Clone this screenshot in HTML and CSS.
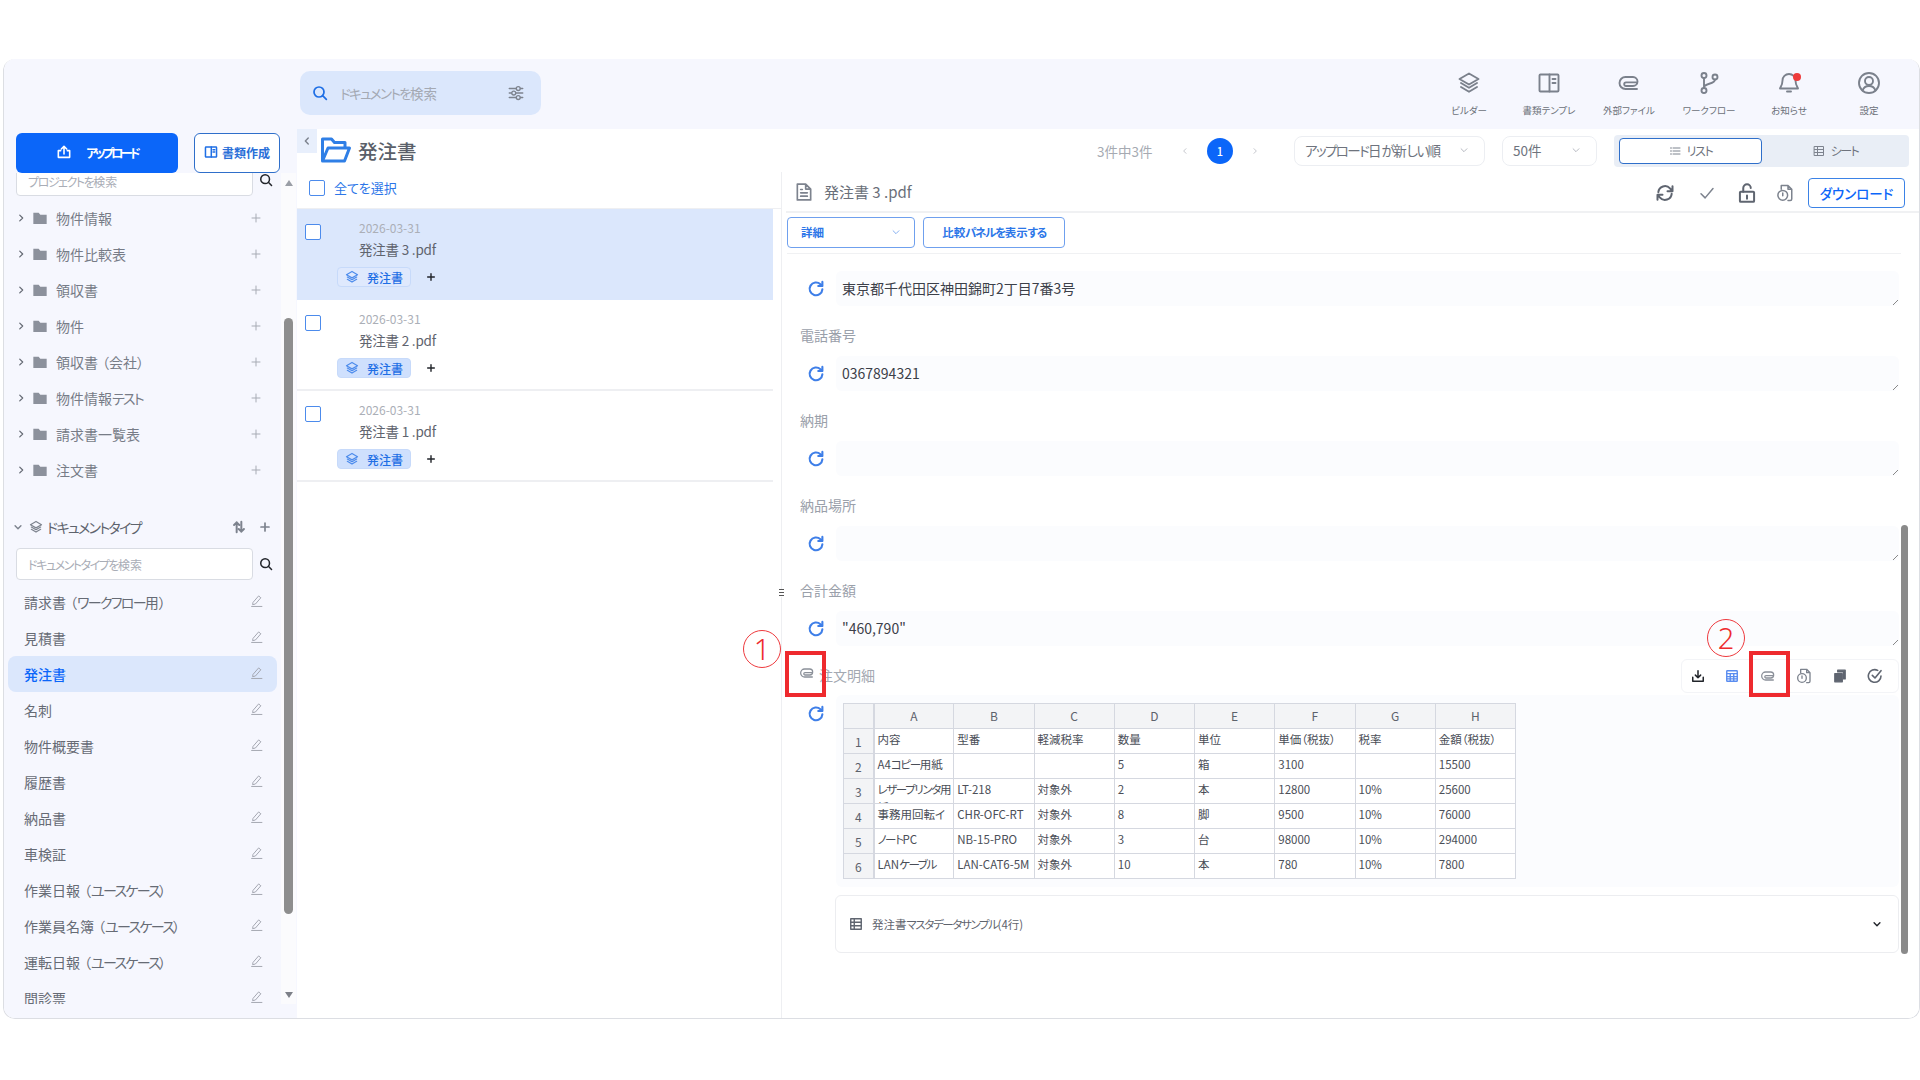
FILE: index.html
```html
<!DOCTYPE html>
<html lang="ja">
<head>
<meta charset="utf-8">
<title>発注書</title>
<link rel="stylesheet" href="styles.css">
</head>
<body>
<svg class="sprite" xmlns="http://www.w3.org/2000/svg">
  <symbol id="i-search" viewBox="0 0 24 24"><circle cx="10.5" cy="10.5" r="7.5"/><path d="M16 16l5.5 5.5"/></symbol>
  <symbol id="i-sliders" viewBox="0 0 24 24"><path d="M3 6h9M18 6h3M3 12h3M12 12h9M3 18h9M18 18h3"/><circle cx="15" cy="6" r="2.6"/><circle cx="9" cy="12" r="2.6"/><circle cx="15" cy="18" r="2.6"/></symbol>
  <symbol id="i-upload" viewBox="0 0 24 24"><path d="M12 15V4M8 7.5L12 3.5l4 4M7 10H3.5v10h17V10H17"/></symbol>
  <symbol id="i-book" viewBox="0 0 24 24"><rect x="2.5" y="3.5" width="19" height="17" rx="1"/><path d="M12.5 3.5v17M15.5 8h3M15.5 12h3"/></symbol>
  <symbol id="i-layers" viewBox="0 0 24 24"><path d="M12 2.5L21.5 8 12 13.5 2.5 8z"/><path d="M4 12l8 4.7 8-4.7M4 16l8 4.7 8-4.7"/></symbol>
  <symbol id="i-clip" viewBox="0 0 24 24"><path d="M20 18H8.500a6 6 0 0 1 0-12H16a4.500 4.500 0 0 1 0 9H9a1.800 1.800 0 0 1 0-3.600h10"/></symbol>
  <symbol id="i-branch" viewBox="0 0 24 24"><circle cx="7" cy="4.500" r="2.500"/><circle cx="7" cy="19.500" r="2.500"/><circle cx="18" cy="6" r="2.500"/><path d="M7 7v10M18 8.500c0 5-11 3.500-11 8"/></symbol>
  <symbol id="i-bell" viewBox="0 0 24 24"><path d="M12 3a6.500 6.500 0 0 0-6.500 6.500c0 5-2.500 7-2.500 8h18c0-1-2.500-3-2.500-8A6.500 6.500 0 0 0 12 3zM10 20.500h4"/></symbol>
  <symbol id="i-user" viewBox="0 0 24 24"><circle cx="12" cy="12" r="10"/><circle cx="12" cy="10" r="4"/><path d="M5.500 19.500c1-3 3.500-4.500 6.500-4.500s5.500 1.500 6.500 4.500"/></symbol>
  <symbol id="i-down" viewBox="0 0 24 24"><path d="M5 9l7 7 7-7"/></symbol>
  <symbol id="i-left" viewBox="0 0 24 24"><path d="M15 5l-7 7 7 7"/></symbol>
  <symbol id="i-right" viewBox="0 0 24 24"><path d="M9 5l7 7-7 7"/></symbol>
  <symbol id="i-plus" viewBox="0 0 24 24"><path d="M12 4v16M4 12h16"/></symbol>
  <symbol id="i-folder" viewBox="0 0 24 24"><path class="solid" d="M2 4h8l2.500 3H22v14H2z"/></symbol>
  <symbol id="i-pen" viewBox="0 0 24 24"><path d="M6 15L16 3.500l4 3.500-10 11.500-4.500 1z"/><path d="M3 23h19"/></symbol>
  <symbol id="i-sort" viewBox="0 0 24 24"><path d="M8 21V4M3.500 8.500L8 4l4.500 4.500M16 3v17M11.500 15.500L16 20l4.500-4.500"/></symbol>
  <symbol id="i-refresh" viewBox="0 0 24 24"><path d="M20.500 12.500a8.500 8.500 0 1 1-2.600-6.800l2.600 2.300M20.500 2.500V8H15"/></symbol>
  <symbol id="i-sync" viewBox="0 0 24 24"><path d="M4 11a8 8 0 0 1 14-4.500l2.500 3M21 4v6h-6M20 13a8 8 0 0 1-14 4.500L3.500 15M3 20v-6h6"/></symbol>
  <symbol id="i-check" viewBox="0 0 24 24"><path d="M4 13l5.500 5.500L20 6"/></symbol>
  <symbol id="i-lock" viewBox="0 0 24 24"><rect x="3.500" y="10.500" width="17" height="12" rx="1"/><path d="M7.500 10.500V6a4.500 4.500 0 0 1 9 0M12 15v4"/></symbol>
  <symbol id="i-history" viewBox="0 0 24 24"><path d="M7 7V2h9l5 5v13a2 2 0 0 1-2 2h-3M16 2v5h5"/><circle cx="9" cy="15" r="6.500"/><path d="M9 12v3.500"/></symbol>
  <symbol id="i-doc" viewBox="0 0 24 24"><path d="M4 2.500h10l6 6v13H4zM14 2.500v6h6M8 13h8M8 17h8M8 9h2"/></symbol>
  <symbol id="i-tray" viewBox="0 0 24 24"><path d="M12 3v12M7.500 10.500L12 15l4.500-4.500M3 14v7h18v-7"/></symbol>
  <symbol id="i-grid" viewBox="0 0 24 24"><rect x="3" y="3" width="18" height="18" rx="1"/><path d="M3 8h18M3 13h18M3 17h18M9 8v13M15 8v13"/></symbol>
  <symbol id="i-copy" viewBox="0 0 24 24"><path class="solid" d="M3 8h13v14H3z"/><path class="solid" d="M8 2h13v15h-3V5H8z"/></symbol>
  <symbol id="i-ok" viewBox="0 0 24 24"><path d="M21 12a9.500 9.500 0 1 1-5-8.400M8 11l4 4 9-11"/></symbol>
  <symbol id="i-list" viewBox="0 0 24 24"><path d="M3 6h2M8 6h14M3 12h2M8 12h14M3 18h2M8 18h14"/></symbol>
  <symbol id="i-sheet" viewBox="0 0 24 24"><rect x="3" y="3" width="18" height="18"/><path d="M3 9h18M3 15h18M9 3v18"/></symbol>
  <symbol id="i-open" viewBox="0 0 32 28"><path d="M2.500 25V3h9l3 3.500H25V12M2.500 25L8 12h21.500l-5 13z"/></symbol>
</svg>

<div class="app">
  <header class="topnav">
    <div class="search">
      <svg class="ic ic-16 blue"><use href="#i-search"/></svg>
      <span class="search-text"><span class="k">ドキュメントを</span>検索</span>
      <svg class="ic ic-18 grey search-filter"><use href="#i-sliders"/></svg>
    </div>
    <nav class="nav">
      <div class="nav-item"><svg class="ic ic-24"><use href="#i-layers"/></svg><span>ビルダー</span></div>
      <div class="nav-item"><svg class="ic ic-24"><use href="#i-book"/></svg><span>書類テンプレ</span></div>
      <div class="nav-item"><svg class="ic ic-24"><use href="#i-clip"/></svg><span>外部ファイル</span></div>
      <div class="nav-item"><svg class="ic ic-24"><use href="#i-branch"/></svg><span>ワークフロー</span></div>
      <div class="nav-item"><div class="bell"><svg class="ic ic-24"><use href="#i-bell"/></svg><i class="dot"></i></div><span>お知らせ</span></div>
      <div class="nav-item"><svg class="ic ic-24"><use href="#i-user"/></svg><span>設定</span></div>
    </nav>
  </header>

  <div class="workspace">
    <aside class="sidebar">
      <div class="side-actions">
        <button class="btn-upload"><svg class="ic ic-16 white"><use href="#i-upload"/></svg><span class="k-tight">アップロード</span></button>
        <button class="btn-create"><svg class="ic ic-14 blue"><use href="#i-book"/></svg>書類作成</button>
      </div>
      <div class="side-scroll">
        <div class="side-content">
          <div class="side-search first"><div class="input"><span class="k">プロジェクトを</span>検索</div><svg class="ic ic-14 dark"><use href="#i-search"/></svg></div>
          <div class="tree">
            <div class="tree-row"><svg class="ic ic-10 chev"><use href="#i-right"/></svg><svg class="ic ic-16 fill"><use href="#i-folder"/></svg><span class="tree-label">物件情報</span><svg class="ic ic-12 light"><use href="#i-plus"/></svg></div>
            <div class="tree-row"><svg class="ic ic-10 chev"><use href="#i-right"/></svg><svg class="ic ic-16 fill"><use href="#i-folder"/></svg><span class="tree-label">物件比較表</span><svg class="ic ic-12 light"><use href="#i-plus"/></svg></div>
            <div class="tree-row"><svg class="ic ic-10 chev"><use href="#i-right"/></svg><svg class="ic ic-16 fill"><use href="#i-folder"/></svg><span class="tree-label">領収書</span><svg class="ic ic-12 light"><use href="#i-plus"/></svg></div>
            <div class="tree-row"><svg class="ic ic-10 chev"><use href="#i-right"/></svg><svg class="ic ic-16 fill"><use href="#i-folder"/></svg><span class="tree-label">物件</span><svg class="ic ic-12 light"><use href="#i-plus"/></svg></div>
            <div class="tree-row"><svg class="ic ic-10 chev"><use href="#i-right"/></svg><svg class="ic ic-16 fill"><use href="#i-folder"/></svg><span class="tree-label">領収書<span class="po">（</span>会社<span class="pc">）</span></span><svg class="ic ic-12 light"><use href="#i-plus"/></svg></div>
            <div class="tree-row"><svg class="ic ic-10 chev"><use href="#i-right"/></svg><svg class="ic ic-16 fill"><use href="#i-folder"/></svg><span class="tree-label">物件情報<span class="k">テスト</span></span><svg class="ic ic-12 light"><use href="#i-plus"/></svg></div>
            <div class="tree-row"><svg class="ic ic-10 chev"><use href="#i-right"/></svg><svg class="ic ic-16 fill"><use href="#i-folder"/></svg><span class="tree-label">請求書一覧表</span><svg class="ic ic-12 light"><use href="#i-plus"/></svg></div>
            <div class="tree-row"><svg class="ic ic-10 chev"><use href="#i-right"/></svg><svg class="ic ic-16 fill"><use href="#i-folder"/></svg><span class="tree-label">注文書</span><svg class="ic ic-12 light"><use href="#i-plus"/></svg></div>
          </div>
          <div class="type-head">
            <svg class="ic ic-10 grey thick"><use href="#i-down"/></svg>
            <svg class="ic ic-14 grey"><use href="#i-layers"/></svg>
            <span class="type-title k">ドキュメントタイプ</span>
            <svg class="ic ic-14 grey thick"><use href="#i-sort"/></svg>
            <svg class="ic ic-12 grey thick"><use href="#i-plus"/></svg>
          </div>
          <div class="side-search second"><div class="input"><span class="k">ドキュメントタイプを</span>検索</div><svg class="ic ic-14 dark"><use href="#i-search"/></svg></div>
          <ul class="types">
            <li><span>請求書<span class="po">（</span><span class="k">ワークフロー</span>用<span class="pc">）</span></span><svg class="ic ic-13 pen"><use href="#i-pen"/></svg></li>
            <li><span>見積書</span><svg class="ic ic-13 pen"><use href="#i-pen"/></svg></li>
            <li class="active"><span>発注書</span><svg class="ic ic-13 pen"><use href="#i-pen"/></svg></li>
            <li><span>名刺</span><svg class="ic ic-13 pen"><use href="#i-pen"/></svg></li>
            <li><span>物件概要書</span><svg class="ic ic-13 pen"><use href="#i-pen"/></svg></li>
            <li><span>履歴書</span><svg class="ic ic-13 pen"><use href="#i-pen"/></svg></li>
            <li><span>納品書</span><svg class="ic ic-13 pen"><use href="#i-pen"/></svg></li>
            <li><span>車検証</span><svg class="ic ic-13 pen"><use href="#i-pen"/></svg></li>
            <li><span>作業日報<span class="po">（</span><span class="k">ユースケース</span><span class="pc">）</span></span><svg class="ic ic-13 pen"><use href="#i-pen"/></svg></li>
            <li><span>作業員名簿<span class="po">（</span><span class="k">ユースケース</span><span class="pc">）</span></span><svg class="ic ic-13 pen"><use href="#i-pen"/></svg></li>
            <li><span>運転日報<span class="po">（</span><span class="k">ユースケース</span><span class="pc">）</span></span><svg class="ic ic-13 pen"><use href="#i-pen"/></svg></li>
            <li><span>問診票</span><svg class="ic ic-13 pen"><use href="#i-pen"/></svg></li>
          </ul>
        </div>
        <div class="side-track">
          <i class="arrow up"></i>
          <div class="thumb"></div>
          <i class="arrow dn"></i>
        </div>
      </div>
    </aside>

    <main class="main">
      <div class="mainbar">
        <button class="collapse"><svg class="ic ic-10 grey thick"><use href="#i-left"/></svg></button>
        <svg class="open-folder"><use href="#i-open"/></svg>
        <h1 class="title">発注書</h1>
        <div class="bar-right">
          <span class="count">3件中3件</span>
          <svg class="ic ic-8 light"><use href="#i-left"/></svg>
          <span class="page">1</span>
          <svg class="ic ic-8 light"><use href="#i-right"/></svg>
          <div class="select sort"><span><span class="k">アップロード</span>日<span class="k">が</span>新<span class="k">しい</span>順</span><svg class="ic ic-10 light"><use href="#i-down"/></svg></div>
          <div class="select size"><span>50件</span><svg class="ic ic-10 light"><use href="#i-down"/></svg></div>
          <div class="toggle">
            <div class="tg on"><svg class="ic ic-12 grey"><use href="#i-list"/></svg><span class="k">リスト</span></div>
            <div class="tg"><svg class="ic ic-12 grey"><use href="#i-sheet"/></svg><span class="k">シート</span></div>
          </div>
        </div>
      </div>

      <div class="panes">
        <section class="files">
          <div class="select-all"><i class="cb"></i><span>全てを選択</span></div>
          <div class="file selected">
            <i class="cb"></i>
            <div class="file-date">2026-03-31</div>
            <div class="file-name">発注書 3 .pdf</div>
            <div class="file-tags"><span class="tag pale"><svg class="ic ic-14 blue2"><use href="#i-layers"/></svg>発注書</span><svg class="ic ic-10 dark thick"><use href="#i-plus"/></svg></div>
          </div>
          <div class="file">
            <i class="cb"></i>
            <div class="file-date">2026-03-31</div>
            <div class="file-name">発注書 2 .pdf</div>
            <div class="file-tags"><span class="tag"><svg class="ic ic-14 blue2"><use href="#i-layers"/></svg>発注書</span><svg class="ic ic-10 dark thick"><use href="#i-plus"/></svg></div>
          </div>
          <div class="file">
            <i class="cb"></i>
            <div class="file-date">2026-03-31</div>
            <div class="file-name">発注書 1 .pdf</div>
            <div class="file-tags"><span class="tag"><svg class="ic ic-14 blue2"><use href="#i-layers"/></svg>発注書</span><svg class="ic ic-10 dark thick"><use href="#i-plus"/></svg></div>
          </div>
        </section>

        <section class="detail">
          <i class="handle"></i>
          <div class="detail-head">
            <svg class="ic ic-20 grey"><use href="#i-doc"/></svg>
            <span class="detail-name">発注書 3 .pdf</span>
            <div class="detail-tools">
              <svg class="ic ic-20 darkgrey"><use href="#i-sync"/></svg>
              <svg class="ic ic-18 grey tool-check"><use href="#i-check"/></svg>
              <svg class="ic ic-20 darkgrey"><use href="#i-lock"/></svg>
              <svg class="ic ic-18 grey tool-history"><use href="#i-history"/></svg>
              <button class="btn-dl">ダウンロード</button>
            </div>
          </div>
          <div class="detail-actions">
            <div class="btn-line wide"><span>詳細</span><svg class="ic ic-10 blue3"><use href="#i-down"/></svg></div>
            <div class="btn-line"><span>比較<span class="k">パネルを</span>表示<span class="k">する</span></span></div>
          </div>
          <div class="form">
            <div class="field"><svg class="ic ic-18 refresh"><use href="#i-refresh"/></svg><div class="value">東京都千代田区神田錦町2丁目7番3号</div></div>
            <div class="label">電話番号</div>
            <div class="field"><svg class="ic ic-18 refresh"><use href="#i-refresh"/></svg><div class="value">0367894321</div></div>
            <div class="label">納期</div>
            <div class="field"><svg class="ic ic-18 refresh"><use href="#i-refresh"/></svg><div class="value"></div></div>
            <div class="label">納品場所</div>
            <div class="field"><svg class="ic ic-18 refresh"><use href="#i-refresh"/></svg><div class="value"></div></div>
            <div class="label">合計金額</div>
            <div class="field"><svg class="ic ic-18 refresh"><use href="#i-refresh"/></svg><div class="value">"460,790"</div></div>
            <div class="table-head">
              <svg class="ic ic-16 clip-grey"><use href="#i-clip"/></svg>
              <span class="label-inline">注文明細</span>
              <div class="table-tools">
                <svg class="ic ic-14 dark"><use href="#i-tray"/></svg>
                <svg class="ic ic-14 blue4"><use href="#i-grid"/></svg>
                <svg class="ic ic-16 clip-grey"><use href="#i-clip"/></svg>
                <svg class="ic ic-16 grey"><use href="#i-history"/></svg>
                <svg class="ic ic-14 fill2"><use href="#i-copy"/></svg>
                <svg class="ic ic-16 darkgrey"><use href="#i-ok"/></svg>
              </div>
            </div>
            <div class="table-row">
              <svg class="ic ic-18 refresh"><use href="#i-refresh"/></svg>
              <div class="table-box">
                <table class="sheet">
                  <thead><tr><th class="rh"></th><th>A</th><th>B</th><th>C</th><th>D</th><th>E</th><th>F</th><th>G</th><th>H</th></tr></thead>
                  <tbody>
                    <tr><th class="rh">1</th><td><div>内容</div></td><td><div>型番</div></td><td><div>軽減税率</div></td><td><div>数量</div></td><td><div>単位</div></td><td><div>単価（税抜）</div></td><td><div>税率</div></td><td><div>金額（税抜）</div></td></tr>
                    <tr><th class="rh">2</th><td><div>A4<span class="k">コピー</span>用紙</div></td><td><div></div></td><td><div></div></td><td><div>5</div></td><td><div>箱</div></td><td><div>3100</div></td><td><div></div></td><td><div>15500</div></td></tr>
                    <tr><th class="rh">3</th><td><div><span class="k">レザープリンタ</span>用紙</div></td><td><div>LT-218</div></td><td><div>対象外</div></td><td><div>2</div></td><td><div>本</div></td><td><div>12800</div></td><td><div>10%</div></td><td><div>25600</div></td></tr>
                    <tr><th class="rh">4</th><td><div>事務用回転イス</div></td><td><div>CHR-OFC-RT</div></td><td><div>対象外</div></td><td><div>8</div></td><td><div>脚</div></td><td><div>9500</div></td><td><div>10%</div></td><td><div>76000</div></td></tr>
                    <tr><th class="rh">5</th><td><div><span class="k">ノート</span>PC</div></td><td><div>NB-15-PRO</div></td><td><div>対象外</div></td><td><div>3</div></td><td><div>台</div></td><td><div>98000</div></td><td><div>10%</div></td><td><div>294000</div></td></tr>
                    <tr><th class="rh">6</th><td><div>LAN<span class="k">ケーブル</span></div></td><td><div>LAN-CAT6-5M</div></td><td><div>対象外</div></td><td><div>10</div></td><td><div>本</div></td><td><div>780</div></td><td><div>10%</div></td><td><div>7800</div></td></tr>
                  </tbody>
                </table>
              </div>
            </div>
            <div class="accordion">
              <svg class="ic ic-14 darkgrey"><use href="#i-sheet"/></svg>
              <span>発注書<span class="k">マスタデータサンプル</span>(4行)</span>
              <svg class="ic ic-10 dark thick"><use href="#i-down"/></svg>
            </div>
          </div>
          <div class="detail-thumb"></div>
        </section>
      </div>
    </main>
  </div>

  <div class="mark box-1"></div>
  <div class="mark box-2"></div>
  <div class="mark num num-1">1</div>
  <div class="mark num num-2">2</div>
</div>
</body>
</html>
```

FILE: styles.css
```css
* { box-sizing: border-box; }
html, body { margin: 0; height: 100%; overflow: hidden; background: #fff; }
body {
  font-family: "Noto Sans CJK JP", "Noto Sans", sans-serif;
  font-feature-settings: "palt";
  color: #555b66;
}
.sprite { position: absolute; width: 0; height: 0; }
button { font: inherit; cursor: pointer; }

/* condensed kana runs and wider brackets */
.k { letter-spacing: -0.12em; }
.k-tight { letter-spacing: -0.24em; }
.po { padding-left: 4px; }
.pc { padding-right: 4px; }

/* icons */
.ic { fill: none; stroke: #7b818c; stroke-width: 2; stroke-linecap: round; stroke-linejoin: round; flex: none; display: block; }
.ic-8 { width: 8px; height: 8px; }
.ic-10 { width: 10px; height: 10px; }
.ic-12 { width: 12px; height: 12px; }
.ic-13 { width: 13px; height: 13px; }
.ic-14 { width: 14px; height: 14px; }
.ic-16 { width: 16px; height: 16px; }
.ic-18 { width: 18px; height: 18px; }
.ic-20 { width: 20px; height: 20px; }
.ic-24 { width: 24px; height: 24px; }
.blue { stroke: #1f6fe5; stroke-width: 2.6; }
.blue2 { stroke: #4c8bec; }
.blue3 { stroke: #6fa0ee; }
.blue4 { stroke: #5a8df0; stroke-width: 2.4; }
.white { stroke: #fff; stroke-width: 2.4; }
.grey { stroke: #7d838e; }
.chev { stroke: #666b75; stroke-width: 3; }
.darkgrey { stroke: #5f6570; stroke-width: 2.4; }
.light { stroke: #a7abb4; }
.dark { stroke: #22252b; stroke-width: 2.6; }
.thick { stroke-width: 3.4; }
.fill { fill: #8c919c; stroke: none; }
.fill2 { fill: #5f6570; stroke: #5f6570; }
.pen { stroke: #a2a6b0; stroke-width: 1.8; }
.refresh { stroke: #3f7fe8; stroke-width: 2.8; }
.clip-grey { stroke: #8b9099; stroke-width: 1.9; }

/* frame */
.app {
  position: relative;
  margin: 59px 0 0 3px;
  width: 1917px;
  height: 960px;
  border: 1px solid #dcdee3;
  border-top: 0;
  border-radius: 12px;
  background: #fff;
  overflow: hidden;
  display: flex;
  flex-direction: column;
}

/* header */
.topnav {
  height: 70px;
  flex: none;
  background: #f6f7fe;
  display: flex;
  align-items: flex-start;
  padding-left: 296px;
}
.search {
  margin-top: 12px;
  width: 241px;
  height: 44px;
  border-radius: 10px;
  background: #dbe7fc;
  display: flex;
  align-items: center;
  padding: 0 16px 0 12px;
  gap: 12px;
}
.search-text { font-size: 13.5px; color: #a4a9b3; flex: 1; }
.search-filter { stroke-width: 1.8; }
.nav { margin-left: auto; display: flex; padding-right: 10px; }
.nav-item {
  width: 80px;
  height: 70px;
  display: flex;
  flex-direction: column;
  align-items: center;
  padding-top: 12px;
  font-size: 9.5px;
  color: #6b7078;
}
.nav-item .ic { stroke-width: 1.9; }
.nav-item span { margin-top: 7.5px; line-height: 14px; }
.bell { position: relative; width: 24px; height: 24px; }
.dot { position: absolute; right: 0; top: 2px; width: 8px; height: 8px; border-radius: 50%; background: #ee3b3b; }

.workspace { flex: 1; display: flex; min-height: 0; }

/* sidebar */
.sidebar {
  width: 293px;
  flex: none;
  background: #f6f7fe;
  display: flex;
  flex-direction: column;
  padding-bottom: 14px;
}
.side-actions { height: 44px; flex: none; padding: 4px 0 0 12px; display: flex; gap: 16px; }
.btn-upload {
  width: 162px;
  height: 40px;
  border: 0;
  border-radius: 6px;
  background: #0b66f9;
  color: #fff;
  font-size: 12.5px;
  font-weight: 700;
  padding: 0 0 2px;
  display: flex;
  align-items: center;
  justify-content: center;
  gap: 14px;
}
.btn-create {
  width: 86px;
  height: 40px;
  border: 1px solid #2f6fca;
  border-radius: 6px;
  background: #fff;
  color: #2a6fd8;
  font-size: 12px;
  font-weight: 700;
  padding: 0 0 2px;
  display: flex;
  align-items: center;
  justify-content: center;
  gap: 4px;
}
.side-scroll { flex: 1; min-height: 0; display: flex; overflow: hidden; }
.side-content { width: 277px; flex: none; overflow: hidden; }
.side-search { display: flex; align-items: center; padding-left: 12px; gap: 6px; height: 32px; }
.side-search.first { margin-top: -10px; height: 33px; }
.side-search.first .input { padding-top: 3px; }
.side-search.second { margin-top: 3px; }
.input {
  width: 237px;
  height: 100%;
  border: 1px solid #d9dce3;
  border-radius: 4px;
  background: #fff;
  color: #a9adb6;
  font-size: 12px;
  display: flex;
  align-items: center;
  padding-left: 11px;
}
.tree { margin-top: 4px; }
.tree-row { height: 36px; display: flex; align-items: center; padding-left: 12px; }
.tree-row > .ic-16 { margin-left: 6px; }
.tree-label { margin-left: 8px; font-size: 14px; color: #777c87; flex: 1; }
.tree-row > .ic-12 { margin-right: 19px; }
.type-head { margin-top: 21px; height: 36px; display: flex; align-items: center; padding: 0 0 0 9px; gap: 3px; }
.type-head .ic-14:nth-child(2) { margin-left: 3px; }
.type-title { font-size: 14px; color: #5e636d; flex: 1; margin-left: 1px; }
.type-head .ic-12 { margin: 0 10px 0 10px; }
.types { list-style: none; margin: 4px 0 0; padding: 0; }
.types li {
  height: 36px;
  margin: 0 4px;
  padding: 0 14px 0 16px;
  border-radius: 8px;
  display: flex;
  align-items: center;
  justify-content: space-between;
  font-size: 14px;
  color: #666b75;
}
.types li .pen { margin-top: -4px; }
.types li.active { background: #dbe7fc; color: #0b66f9; font-weight: 500; }
.side-track { width: 15px; flex: none; background: #fbfbfd; display: flex; flex-direction: column; align-items: center; padding-top: 7px; }
.arrow { width: 0; height: 0; border-left: 4px solid transparent; border-right: 4px solid transparent; flex: none; }
.arrow.up { border-bottom: 6px solid #9a9ea6; }
.arrow.dn { border-top: 6px solid #7d8088; margin-top: 78px; }
.thumb { width: 9px; height: 596px; margin-top: 132px; border-radius: 5px; background: #8e8e8e; flex: none; }

/* main */
.main { flex: 1; min-width: 0; display: flex; flex-direction: column; background: #fff; }
.mainbar { height: 43px; flex: none; display: flex; align-items: flex-start; }
.collapse { width: 20px; height: 24px; border: 0; padding: 0; background: #e8effc; display: flex; align-items: center; justify-content: center; }
.open-folder { width: 32px; height: 28px; margin: 7px 0 0 3px; fill: none; stroke: #2f7fe6; stroke-width: 3; stroke-linejoin: round; flex: none; }
.title { margin: 0 0 0 6px; font-size: 19.5px; font-weight: 500; line-height: 43px; color: #5a5f69; }
.bar-right { margin-left: auto; display: flex; align-items: center; height: 43px; padding-right: 10px; }
.count { font-size: 13.5px; color: #a6aab2; width: 58px; margin-right: 26px; white-space: nowrap; }
.page { width: 26px; height: 26px; margin: 0 18px; border-radius: 50%; background: #0b66f9; color: #fff; font-size: 11px; font-weight: 500; display: flex; align-items: center; justify-content: center; }
.select { height: 30px; border: 1px solid #eceef2; border-radius: 8px; display: flex; align-items: center; justify-content: space-between; font-size: 13.5px; color: #6e737d; padding: 0 15px 2px 10px; }
.sort { width: 191px; margin-left: 35px; }
.size { width: 95px; margin-left: 17px; }
.toggle { margin-left: 17px; width: 295px; height: 32px; border-radius: 4px; background: #e9eef6; padding: 3px 0 3px 5px; display: flex; }
.tg { flex: 1; display: flex; align-items: center; justify-content: center; gap: 6px; font-size: 12px; color: #6e737d; }
.tg.on { flex: none; width: 143px; background: #fff; border: 1.5px solid #2f6fca; border-radius: 4px; }

.panes { flex: 1; min-height: 0; display: flex; }
.files { width: 484px; flex: none; }
.select-all { height: 37px; display: flex; align-items: center; padding: 0 0 5px 12px; gap: 9px; font-size: 13px; color: #2c76e8; border-bottom: 1px solid #eeeff2; }
.cb { display: block; width: 16px; height: 16px; border: 1.5px solid #4c8bec; border-radius: 2px; background: #fff; flex: none; }
.file { position: relative; width: 476px; height: 91px; border-bottom: 2px solid #eeeff2; padding: 11px 0 0 62px; }
.file.selected { background: #dbe7fc; border-bottom: 0; }
.file .cb { position: absolute; left: 8px; top: 15px; }
.file-date { font-size: 12px; line-height: 16px; color: #abafb7; }
.file-name { margin-top: 3px; font-size: 13.5px; line-height: 20px; color: #5f646e; letter-spacing: -0.2px; }
.file-tags { margin: 8px 0 0 -22px; display: flex; align-items: center; gap: 15px; }
.tag { width: 74px; height: 20px; border: 1px solid #c7dafa; border-radius: 4px; background: #cfe0fd; color: #1f6fe5; font-size: 12px; font-weight: 500; display: flex; align-items: center; justify-content: center; gap: 8px; }
.tag.pale { background: #dfe9fd; }

.detail { position: relative; flex: 1; min-width: 0; border-left: 1px solid #eeeff2; }
.handle { position: absolute; left: -3px; top: 417px; width: 5px; height: 8px; background: repeating-linear-gradient(#555 0 1px, #fff 1px 3px); }
.detail-head { height: 41px; margin-left: 4px; display: flex; align-items: center; padding-left: 8px; border-bottom: 2px solid #f0f1f3; }
.detail-name { margin-left: 10px; font-size: 15px; color: #6a6f79; }
.detail-tools { margin-left: auto; margin-top: 2px; display: flex; align-items: center; padding-right: 14px; gap: 21px; }
.tool-check { margin-left: 2px; }
.tool-history { margin-left: -2px; }
.btn-dl { margin-left: -7px; width: 97px; height: 30px; border: 1px solid #3b82e6; border-radius: 4px; background: #fff; color: #0b66f9; font-size: 13.5px; font-weight: 500; padding: 0; }
.detail-actions { height: 41px; margin: 0 18px 0 5px; padding-bottom: 2px; display: flex; align-items: center; gap: 8px; border-bottom: 1px solid #f0f1f3; }
.btn-line { height: 31px; border: 1.5px solid #6fa0ee; border-radius: 4px; background: #fff; color: #2c76e8; font-size: 11.5px; font-weight: 700; white-space: nowrap; display: flex; align-items: center; justify-content: center; padding: 0; width: 142px; }
.btn-line.wide { width: 128px; justify-content: space-between; padding: 0 13px; }
.form { padding: 17px 20px 0 18px; }
.field { height: 35px; display: flex; align-items: center; gap: 11px; padding-left: 7px; }
.value {
  flex: 1;
  height: 35px;
  line-height: 34px;
  padding-left: 6px;
  border-radius: 6px;
  font-size: 14px;
  color: #3c4049;
  background:
    linear-gradient(135deg, transparent 0 71%, #888 71% 75%, transparent 75% 84%, #888 84% 88%, transparent 88%) right 1px bottom 1px / 9px 9px no-repeat,
    #fbfcfe;
}
.label { height: 50px; padding-top: 19px; line-height: 20px; font-size: 14px; color: #9aa0aa; }
.table-head { height: 49px; display: flex; align-items: center; }
.table-head > .clip-grey { margin-left: -1px; margin-top: 5px; }
.label-inline { margin-left: 4px; font-size: 14px; color: #a4a9b2; margin-top: 8px; line-height: 20px; }
.table-tools { margin-left: auto; margin-top: 10px; width: 218px; height: 34px; border: 1px solid #f3f4f7; border-radius: 6px; background: #fff; display: flex; align-items: center; justify-content: space-between; padding: 0 15px 0 9px; }
.table-row { display: flex; gap: 11px; padding-left: 7px; }
.table-row > .refresh { margin-top: 10px; }
.table-box { flex: 1; height: 192px; padding: 8px 7px; border-radius: 6px; background: #fbfcfe; }
.sheet { border-collapse: collapse; table-layout: fixed; width: 673px; background: #fff; border: 1.5px solid #d5d8e0; }
.sheet th, .sheet td { border: 1px solid #d5d8e0; padding: 0; font-weight: 400; }
.sheet thead th { height: 25px; padding-bottom: 2px; background: #f3f4f6; font-size: 12px; color: #5d626c; }
.sheet th.rh { width: 30px; background: #f3f4f6; font-size: 12px; color: #5d626c; border-right-width: 2px; }
.sheet td { height: 25px; vertical-align: top; }
.sheet td div { height: 24px; overflow: hidden; padding: 1px 0 0 3px; font-size: 11.5px; line-height: 18px; color: #4a4e57; word-break: break-all; }
.accordion { margin: 8px 0 0 35px; height: 58px; border: 1px solid #ecedf0; border-radius: 6px; display: flex; align-items: center; padding: 0 16px 0 13px; gap: 9px; font-size: 11.5px; color: #5f646e; background: #fff; }
.accordion span { flex: 1; }
.accordion span span { flex: none; }
.detail-thumb { position: absolute; left: 1119px; top: 353px; width: 7px; height: 429px; border-radius: 4px; background: #8a8a8a; }

/* annotation overlays */
.mark { position: absolute; }
.box-1, .box-2 { border: 4px solid #ee2a2e; }
.box-1 { left: 781px; top: 592px; width: 41px; height: 46px; }
.box-2 { left: 1745px; top: 592px; width: 41px; height: 46px; }
.num { width: 38px; height: 38px; border: 1px solid #ee3a3e; border-radius: 50%; color: #ee2a2e; font-family: "Noto Sans", sans-serif; font-weight: 300; font-size: 29px; line-height: 36px; text-align: center; }
.num-1 { left: 739px; top: 571px; }
.num-2 { left: 1703px; top: 560px; }
```
